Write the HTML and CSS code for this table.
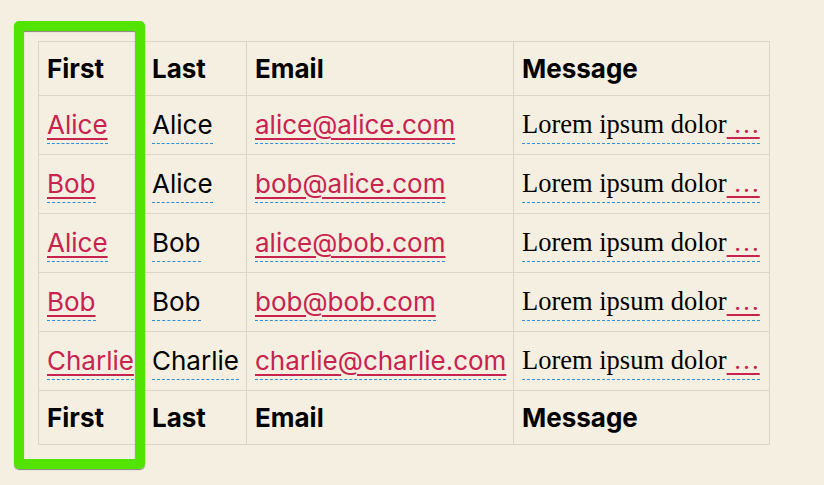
FILE: index.html
```html
<!DOCTYPE html>
<html>
<head>
<meta charset="utf-8">
<link rel="stylesheet" href="styles.css">
</head>
<body>
<div class="page">
  <table class="grid">
    <colgroup>
      <col class="c-first"><col class="c-last"><col class="c-email"><col class="c-msg">
    </colgroup>
    <thead>
      <tr><th>First</th><th>Last</th><th>Email</th><th>Message</th></tr>
    </thead>
    <tbody>
      <tr>
        <td><span class="cell"><a href="#">Alice</a></span></td>
        <td><span class="cell">Alice</span></td>
        <td><span class="cell"><a href="#">alice@alice.com</a></span></td>
        <td class="msg"><span class="cell">Lorem ipsum dolor<a href="#" class="more">&nbsp;…</a></span></td>
      </tr>
      <tr>
        <td><span class="cell"><a href="#">Bob</a></span></td>
        <td><span class="cell">Alice</span></td>
        <td><span class="cell"><a href="#">bob@alice.com</a></span></td>
        <td class="msg"><span class="cell">Lorem ipsum dolor<a href="#" class="more">&nbsp;…</a></span></td>
      </tr>
      <tr>
        <td><span class="cell"><a href="#">Alice</a></span></td>
        <td><span class="cell">Bob</span></td>
        <td><span class="cell"><a href="#">alice@bob.com</a></span></td>
        <td class="msg"><span class="cell">Lorem ipsum dolor<a href="#" class="more">&nbsp;…</a></span></td>
      </tr>
      <tr>
        <td><span class="cell"><a href="#">Bob</a></span></td>
        <td><span class="cell">Bob</span></td>
        <td><span class="cell"><a href="#">bob@bob.com</a></span></td>
        <td class="msg"><span class="cell">Lorem ipsum dolor<a href="#" class="more">&nbsp;…</a></span></td>
      </tr>
      <tr>
        <td><span class="cell"><a href="#">Charlie</a></span></td>
        <td><span class="cell">Charlie</span></td>
        <td><span class="cell"><a href="#">charlie@charlie.com</a></span></td>
        <td class="msg"><span class="cell">Lorem ipsum dolor<a href="#" class="more">&nbsp;…</a></span></td>
      </tr>
    </tbody>
    <tfoot>
      <tr><th>First</th><th>Last</th><th>Email</th><th>Message</th></tr>
    </tfoot>
  </table>
  <div class="highlight"></div>
</div>
</body>
</html>
```
FILE: styles.css
```css
html, body {
  margin: 0;
  background: #f4efe1;
}
.page {
  position: relative;
  padding: 41px 0 0 38px;
  min-height: 485px;
  box-sizing: border-box;
  font-family: Inter, "Liberation Sans", sans-serif;
  font-size: 26px;
  color: #000;
}
.grid {
  border-collapse: collapse;
  table-layout: fixed;
  width: 731px;
}
.c-first { width: 105px; }
.c-last { width: 103px; }
.c-email { width: 267px; }
.c-msg { width: 256px; }
.grid th, .grid td {
  border: 1px solid #dad5c4;
  text-align: left;
  vertical-align: top;
  white-space: nowrap;
  overflow: visible;
}
.grid th {
  font-weight: 700;
  padding: 8px 8px;
  line-height: 37px;
}
.grid td {
  padding: 12px 8px 10px;
  line-height: 33px;
}
.cell {
  display: inline-block;
  line-height: 33px;
  padding-bottom: 2px;
  border-bottom: 1px dashed #2f8fd8;
}
.grid a {
  color: #c8234f;
  text-decoration: underline;
  text-decoration-thickness: 2px;
  text-underline-offset: 4px;
}
.msg {
  font-family: "Liberation Serif", "DejaVu Serif", serif;
  font-size: 26.5px;
}
.highlight {
  position: absolute;
  left: 14px;
  top: 21px;
  width: 131px;
  height: 448px;
  box-sizing: border-box;
  border: 10px solid #52e400;
  border-radius: 5px;
  box-shadow: 0 1px 1px rgba(0,0,0,0.45), inset 0 1px 1px rgba(0,0,0,0.45);
}
```
